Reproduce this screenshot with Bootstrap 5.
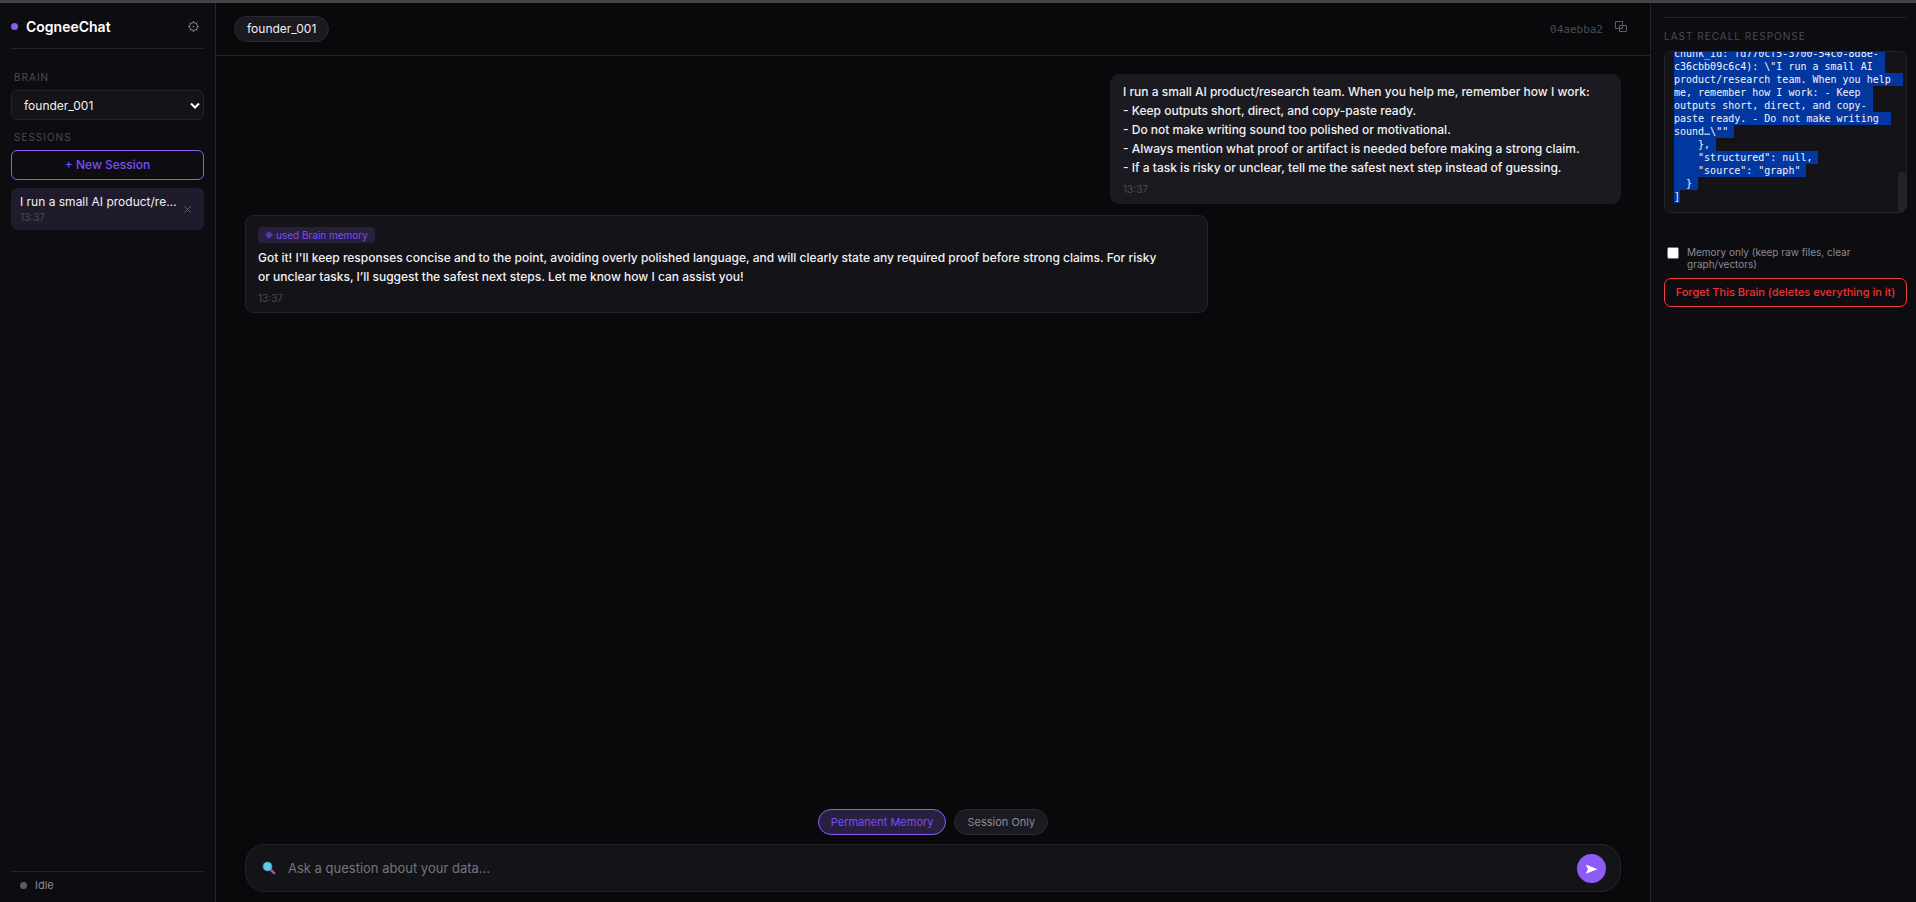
<!DOCTYPE html>
<html lang="en" data-bs-theme="dark">
<head>
<meta charset="utf-8">
<meta name="viewport" content="width=device-width, initial-scale=1">
<title>CogneeChat</title>
<link href="https://cdn.jsdelivr.net/npm/bootstrap@5.3.0/dist/css/bootstrap.min.css" rel="stylesheet">
<style>
:root{--edge:#232329;--panel:#0d0c11;--surface:#141418;--raised:#1a1a20;--accent:#8b5cf6;--ink:#f1f1f4;--soft:#8b8b95;--faint:#4b4b54}
body{font-family:Inter,"Liberation Sans",sans-serif;font-size:13px;line-height:19px;background:#09090b;color:var(--ink);border-top:3px solid #444446}
button,input,select{font-family:inherit}
button{line-height:16px}
.side{width:216px;background:var(--panel);border-right:1px solid var(--edge);padding:0 11px}
.inspector{width:266px;background:var(--panel);border-left:1px solid var(--edge);padding:14px 9px 0 13px}
.brand{height:46px;padding-top:2px;border-bottom:1px solid var(--edge)}
.brand h1{font-size:14px;line-height:20px;font-weight:600}
.dot{width:7px;height:7px;border-radius:50%;background:var(--accent)}
.plain{background:none;border:0;padding:0;color:var(--soft);display:flex}
.caption{display:block;font-size:10px;line-height:14px;letter-spacing:1px;color:var(--faint);text-transform:uppercase;font-weight:400;margin:0;padding-left:3px}
.side .caption{margin:10px 0 6px}
.side .brand + .caption{margin-top:21px}
.brain-pick{position:relative}
.brain-pick select{appearance:none;display:block;width:100%;height:30px;background:var(--surface);border:1px solid var(--edge);border-radius:6px;color:var(--ink);font-size:12px;font-weight:400;padding:0 24px 0 12px}
.brain-pick svg{position:absolute;right:4px;top:12px;pointer-events:none}
.new-btn{height:30px;background:none;border:1px solid var(--accent);border-radius:6px;color:#7c4df5;font-size:12px;font-weight:500}
.session{height:42px;background:#1f1a2c;border-radius:6px;padding:0 13px 0 9px}
.session a{color:var(--ink);font-size:12px;line-height:16px;font-weight:400;white-space:nowrap}
.stamp{display:block;font-size:10px;line-height:15px;color:var(--faint)}
.status-row{border-top:1px solid var(--edge);height:31px;padding:0 0 3px 9px;font-size:11px;color:var(--soft)}
.status-row .dot{background:#5d5d66}
.topbar{height:53px;border-bottom:1px solid var(--edge);padding:0 23px 0 18px}
.chip{height:26px;border:1px solid #29292f;border-radius:13px;background:var(--raised);font-size:12px;font-weight:400;line-height:24px;padding:0 12px}
.mono{font-family:"DejaVu Sans Mono","Liberation Mono",monospace}
.session-id{font-size:11px;color:var(--faint)}
.thread{padding:18px 29px 0;gap:11px}
.bubble{border:1px solid var(--edge);border-radius:9px;background:var(--surface);padding:7px 12px 6px;max-width:70%}
.bubble p{margin:0;white-space:pre-line;font-size:12px;font-weight:500}
.bubble.mine{background:var(--raised);border-color:var(--raised);min-width:511px}
.bubble .stamp{margin-top:5px}
.memory-tag{display:flex;width:max-content;align-items:center;gap:3px;background:#271f3c;color:#7c4df5;border-radius:4px;font-size:10px;line-height:16px;padding:0 7px;margin:4px 0 5px}
.memory-tag + p{margin-bottom:1px}
.composer-area{padding:0 29px 10px}
.mode{height:26px;border-radius:13px;border:1px solid #29292f;background:var(--raised);color:var(--soft);font-size:11px;padding:0 12px}
.mode.on{border-color:var(--accent);background:#291f40;color:#7c4df5}
.composer{height:48px;border:1px solid var(--edge);border-radius:20px;background:var(--surface);padding:0 14px 0 16px;margin-top:9px}
.composer input{background:none;border:0;outline:0;color:var(--ink);font-size:13px;padding:0 0 0 12px;min-width:0}
.composer input::placeholder{color:#75757a;opacity:1}
.send{width:29px;height:29px;border-radius:50%;border:0;padding:0;background:var(--accent)}
.inspector-head{border-top:1px solid var(--edge);padding-top:11px}
.inspector-head .caption{margin-bottom:8px;padding:0}
.recall{position:relative;height:162px;border:1px solid var(--edge);border-radius:7px;background:var(--surface);padding:0 9px 9px;overflow:hidden}
.recall pre{font-size:10px;line-height:13px;margin:0;overflow:visible;color:#f4f4f7}
.recall pre span{display:block;width:max-content;background:#0237a0;padding-right:6px}
.recall pre span:last-child{padding-right:0}
.thumb{position:absolute;right:0;bottom:0;width:8px;height:40px;border-radius:4px;background:#232329}
.keep{font-size:10px;line-height:12px;color:var(--soft);gap:8px;padding:0 40px 0 3px;margin-top:33px}
.keep input{appearance:none;width:12px;height:12px;margin:1px 0 0;background:#fff;border:1px solid #767676;border-radius:2px;flex:none}
.keep input:checked{background:var(--accent)}
.forget{height:29px;background:none;border:1px solid #ef4040;border-radius:7px;color:#ef3333;font-size:11px;font-weight:500;padding:0 0 1px}
</style>
</head>
<body class="vh-100 d-flex overflow-hidden">
<aside class="side d-flex flex-column flex-shrink-0">
  <div class="brand d-flex align-items-center flex-shrink-0">
    <span class="dot me-2"></span>
    <h1 class="m-0 flex-grow-1">CogneeChat</h1>
    <button class="plain me-1" aria-label="Settings">
      <svg width="13" height="13" viewBox="0 0 13 13" fill="none" stroke="currentColor"><circle cx="6.5" cy="6.5" r="4"/><circle cx="6.5" cy="6.5" r=".8" fill="currentColor" stroke="none"/><path d="M6.5 1v1.6M6.5 10.4V12M1 6.500h1.600M10.400 6.500H12M2.600 2.600l1.100 1.100M9.300 9.300l1.100 1.100M2.600 10.400l1.100-1.100M9.300 3.700l1.100-1.100"/></svg>
    </button>
  </div>
  <label class="caption" for="brain">Brain</label>
  <div class="brain-pick">
    <select id="brain"><option>founder_001</option></select>
    <svg width="10" height="8" viewBox="0 0 10 8" fill="none" stroke="#fff" stroke-width="2"><path d="M1 1.500l4 4 4-4"/></svg>
  </div>
  <h2 class="caption">Sessions</h2>
  <button class="new-btn w-100 flex-shrink-0">+ New Session</button>
  <div class="session d-flex align-items-center justify-content-between mt-2 flex-shrink-0">
    <div><a href="#" class="d-block text-decoration-none">I run a small AI product/re…</a><span class="stamp">13:37</span></div>
    <button class="plain" aria-label="Delete session"><svg width="7" height="7" viewBox="0 0 7 7" stroke="#65656e"><path d="M.5.5l6 6M6.500.5l-6 6"/></svg></button>
  </div>
  <div class="status-row d-flex align-items-center gap-2 mt-auto flex-shrink-0"><span class="dot"></span>Idle</div>
</aside>

<main class="d-flex flex-column flex-grow-1">
  <header class="topbar d-flex align-items-center justify-content-between flex-shrink-0">
    <div class="chip">founder_001</div>
    <div class="d-flex align-items-center">
      <span class="session-id mono me-2 pe-1">04aebba2</span>
      <button class="plain mb-1" aria-label="Copy session ID"><svg width="12" height="12" viewBox="0 0 12 12" fill="none" stroke="#5d5d66"><path d="M.5.500h7v7h-7zM4.500 4.500h7v6h-7z"/></svg></button>
    </div>
  </header>
  <section class="thread d-flex flex-column flex-grow-1 overflow-hidden">
    <article class="bubble mine align-self-end">
      <p>I run a small AI product/research team. When you help me, remember how I work:
- Keep outputs short, direct, and copy-paste ready.
- Do not make writing sound too polished or motivational.
- Always mention what proof or artifact is needed before making a strong claim.
- If a task is risky or unclear, tell me the safest next step instead of guessing.</p>
      <span class="stamp">13:37</span>
    </article>
    <article class="bubble align-self-start">
      <div class="memory-tag"><svg width="8" height="8" viewBox="0 0 8 8" fill="none" stroke="currentColor"><path d="M4 .7L7.300 4 4 7.300.7 4z"/><path d="M4 2.300L5.700 4 4 5.700 2.300 4z" fill="currentColor" stroke="none"/></svg>used Brain memory</div>
      <p>Got it! I'll keep responses concise and to the point, avoiding overly polished language, and will clearly state any required proof before strong claims. For risky or&nbsp;unclear tasks, I’ll suggest the safest next steps. Let me know how I can assist you!</p>
      <span class="stamp">13:37</span>
    </article>
  </section>
  <footer class="composer-area">
    <div class="d-flex justify-content-center gap-2">
      <button class="mode on">Permanent Memory</button>
      <button class="mode">Session Only</button>
    </div>
    <form class="composer d-flex align-items-center" onsubmit="return false">
      <svg width="14" height="14" viewBox="0 0 14 14"><path d="M8.500 8.500l3.600 3.600" stroke="#9a5aa0" stroke-width="2.600" stroke-linecap="round"/><circle cx="5.500" cy="5.500" r="4.500" fill="#5fcbea" stroke="#3f82ad" stroke-width=".6"/></svg>
      <input class="flex-grow-1" type="text" aria-label="Question" placeholder="Ask a question about your data...">
      <button class="send d-flex align-items-center justify-content-center" aria-label="Send"><svg width="13" height="12" viewBox="0 0 13 12" fill="#fff"><path d="M.8 2.500L12.500 7.300.8 11.800 3 7.300z"/></svg></button>
    </form>
  </footer>
</main>

<aside class="inspector flex-shrink-0">
  <div class="inspector-head"><h2 class="caption">Last recall response</h2></div>
  <div class="recall d-flex flex-column justify-content-end">
<pre class="mono"><span>chunk_id: fd770cf5-3700-54c0-8d8e-</span><span>c36cbb09c6c4): \"I run a small AI </span><span>product/research team. When you help </span><span>me, remember how I work: - Keep </span><span>outputs short, direct, and copy-</span><span>paste ready. - Do not make writing </span><span>sound…\""</span><span>    },</span><span>    "structured": null,</span><span>    "source": "graph"</span><span>  }</span><span>]</span></pre>
    <div class="thumb"></div>
  </div>
  <label class="keep d-flex"><input type="checkbox"><span>Memory only (keep raw files, clear graph/vectors)</span></label>
  <button class="forget w-100 mt-2">Forget This Brain (deletes everything in it)</button>
</aside>
<script src="https://cdn.jsdelivr.net/npm/bootstrap@5.3.0/dist/js/bootstrap.bundle.min.js"></script>
</body>
</html>
